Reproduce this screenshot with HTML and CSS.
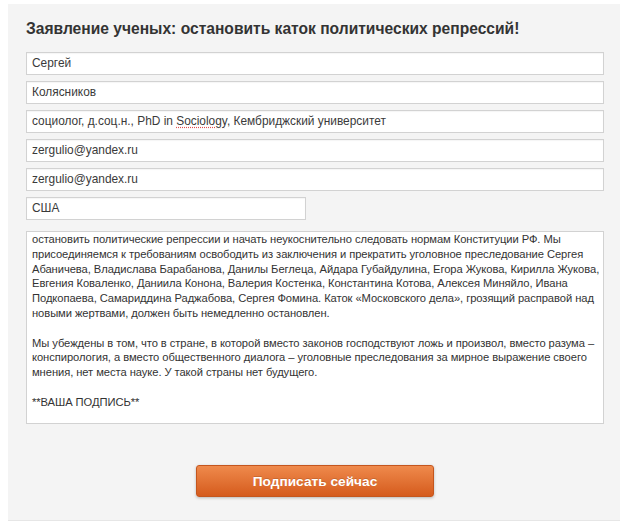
FILE: index.html
```html
<!DOCTYPE html>
<html lang="ru">
<head>
<meta charset="utf-8">
<title>Заявление ученых</title>
<link rel="stylesheet" href="styles.css">
</head>
<body>
<div class="panel">
  <h1 class="title">Заявление ученых: остановить каток политических репрессий!</h1>
  <form class="form">
    <div class="field">Сергей</div>
    <div class="field">Колясников</div>
    <div class="field">социолог, д.соц.н., PhD in <span class="spell">Sociology</span>, Кембриджский университет</div>
    <div class="field">zergulio@yandex.ru</div>
    <div class="field">zergulio@yandex.ru</div>
    <div class="field field-short">США</div>
    <div class="textarea">
      <div class="textarea-text">остановить политические репрессии и начать неукоснительно следовать нормам Конституции РФ. Мы<br>присоединяемся к требованиям освободить из заключения и прекратить уголовное преследование Сергея<br>Абаничева, Владислава Барабанова, Данилы Беглеца, Айдара Губайдулина, Егора Жукова, Кирилла Жукова,<br>Евгения Коваленко, Даниила Конона, Валерия Костенка, Константина Котова, Алексея Миняйло, Ивана<br>Подкопаева, Самариддина Раджабова, Сергея Фомина. Каток «Московского дела», грозящий расправой над<br>новыми жертвами, должен быть немедленно остановлен.<br><br>Мы убеждены в том, что в стране, в которой вместо законов господствуют ложь и произвол, вместо разума –<br>конспирология, а вместо общественного диалога – уголовные преследования за мирное выражение своего<br>мнения, нет места науке. У такой страны нет будущего.<br><br>**ВАША ПОДПИСЬ**</div>
    </div>
    <div class="actions">
      <button type="button" class="btn">Подписать сейчас</button>
    </div>
  </form>
</div>
</body>
</html>
```

FILE: styles.css
```css
html, body {
  margin: 0;
  padding: 0;
  background: #ffffff;
}
body {
  font-family: "Liberation Sans", Arial, sans-serif;
  color: #333;
}
.panel {
  margin: 4px 0 0 8px;
  height: 517px;
  box-sizing: border-box;
  background: #f4f4f4;
  border-bottom: 1px solid #e6e6e6;
  padding: 14px 16px 0 18px;
}
.title {
  margin: 0;
  font-size: 15.6px;
  line-height: 22px;
  font-weight: bold;
  color: #333;
}
.form {
  margin-top: 12px;
  display: flex;
  flex-direction: column;
  gap: 6px;
}
.field {
  height: 23px;
  box-sizing: border-box;
  border: 1px solid #d2d2d2;
  background: #fff;
  font-size: 11.9px;
  line-height: 21px;
  padding: 0 5px;
  color: #3a3a3a;
  white-space: nowrap;
  box-shadow: inset 0 1px 1px rgba(0,0,0,0.04);
}
.field-short {
  width: 280px;
}
.spell {
  text-decoration: underline dotted #e05050;
  text-underline-offset: 2px;
}
.textarea {
  margin-top: 5px;
  height: 193px;
  box-sizing: border-box;
  border: 1px solid #d2d2d2;
  background: #fff;
  overflow: hidden;
  padding: 0 1px 0 5px;
}
.textarea-text {
  font-size: 11.2px;
  line-height: 14.8px;
  letter-spacing: -0.07px;
  color: #333;
  white-space: nowrap;
}
.actions {
  display: flex;
  justify-content: center;
  margin-top: 35px;
}
.btn {
  width: 238px;
  height: 32px;
  border: 1px solid #c4561e;
  border-radius: 3px;
  background: linear-gradient(#ef8a4c, #d55b1d);
  color: #fff;
  font-family: "Liberation Sans", Arial, sans-serif;
  font-size: 13.7px;
  font-weight: bold;
  box-shadow: 0 1px 3px rgba(0,0,0,0.25);
  text-shadow: 0 -1px 0 rgba(0,0,0,0.15);
  padding: 0;
}
```
